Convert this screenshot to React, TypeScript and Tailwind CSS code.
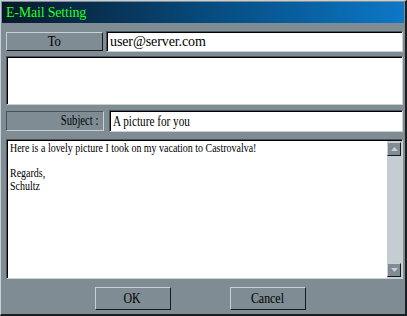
import React from "react";

const serif = { fontFamily: '"Liberation Serif", "Times New Roman", serif' };

function Raised({ children, className = "" }: { children?: React.ReactNode; className?: string }) {
  return (
    <div
      className={
        "border-t border-l border-t-[#c7d0d4] border-l-[#c7d0d4] border-b border-r border-b-[#151a1c] border-r-[#151a1c] bg-[#7f8c93] " +
        className
      }
    >
      {children}
    </div>
  );
}

function Sunken({ children, className = "" }: { children?: React.ReactNode; className?: string }) {
  return (
    <div
      className={
        "border-t border-l border-t-[#4a5458] border-l-[#4a5458] border-b border-r border-b-[#c7d0d4] border-r-[#c7d0d4] " +
        className
      }
    >
      <div className="h-full w-full border-t border-l border-t-[#000000] border-l-[#000000] bg-white overflow-hidden">{children}</div>
    </div>
  );
}

export default function App() {
  return (
    <div
      className="w-[407px] h-[316px] bg-[#7f8c93] border-t border-l border-t-[#c7d0d4] border-l-[#c7d0d4] border-b-2 border-r-2 border-b-[#1a1f21] border-r-[#1a1f21] flex flex-col text-black"
      style={serif}
    >
      <div className="mx-[1px] mt-[1px] h-[21px] bg-gradient-to-r from-[#061a2c] via-[#064a7c] to-[#0c78c8] flex items-center pl-[4px]">
        <span className="text-[14px] text-[#22ff22] leading-none tracking-[-0.2px]">E-Mail Setting</span>
      </div>
      <div className="flex flex-col pl-[5px] pr-[2px] mt-[8px]">
        <div className="flex items-center h-[21px] gap-[3px]">
          <Raised className="w-[97px] h-[19px] flex items-center justify-center text-[14px] leading-none">
            <span className="inline-block scale-x-[0.9]">To</span>
          </Raised>
          <Sunken className="flex-1 h-[21px]">
            <div className="pl-[2px] text-[14px] leading-[18px] tracking-[-0.1px]">user@server.com</div>
          </Sunken>
        </div>
        <Sunken className="h-[49px] mt-[4px]" />
        <div className="flex items-center h-[22px] gap-[5px] mt-[5px]">
          <div className="w-[98px] h-[20px] border-t border-l border-t-[#4a5458] border-l-[#4a5458] border-b border-r border-b-[#c7d0d4] border-r-[#c7d0d4] flex items-center justify-end pr-[5px] text-[14px] leading-none">
            <span className="inline-block origin-right scale-x-[0.76]">Subject :</span>
          </div>
          <Sunken className="flex-1 h-[22px]">
            <div className="pl-[2px] text-[14px] leading-[19px]">
              <span className="inline-block origin-left scale-x-[0.8] whitespace-nowrap">A picture for you</span>
            </div>
          </Sunken>
        </div>
        <Sunken className="h-[140px] mt-[7px]">
          <div className="flex h-full">
            <div className="flex-1 pl-[2px] pt-[1px] text-[12px] leading-[12.5px] whitespace-nowrap">
              <div className="origin-left scale-x-[0.83]">Here is a lovely picture I took on my vacation to Castrovalva!</div>
              <div>&nbsp;</div>
              <div className="origin-left scale-x-[0.83]">Regards,</div>
              <div className="origin-left scale-x-[0.83]">Schultz</div>
            </div>
            <div className="w-[15px] h-full bg-[#c4cdd1] flex flex-col justify-between py-[1px]">
              <Raised className="w-[14px] h-[14px] flex items-center justify-center">
                <svg width="7" height="4" viewBox="0 0 7 4"><path d="M3.5 0 L7 4 L0 4 Z" fill="#c7d0d4" /></svg>
              </Raised>
              <Raised className="w-[14px] h-[14px] flex items-center justify-center">
                <svg width="7" height="4" viewBox="0 0 7 4"><path d="M0 0 L7 0 L3.5 4 Z" fill="#c7d0d4" /></svg>
              </Raised>
            </div>
          </div>
        </Sunken>
      </div>
      <div className="flex justify-center gap-[59px] mt-[8px] pr-[6px]">
        <Raised className="w-[76px] h-[23px] flex items-center justify-center text-[14px] leading-none">
          <span className="inline-block scale-x-[0.85]">OK</span>
        </Raised>
        <Raised className="w-[76px] h-[23px] flex items-center justify-center text-[14px] leading-none">
          <span className="inline-block scale-x-[0.85]">Cancel</span>
        </Raised>
      </div>
    </div>
  );
}
